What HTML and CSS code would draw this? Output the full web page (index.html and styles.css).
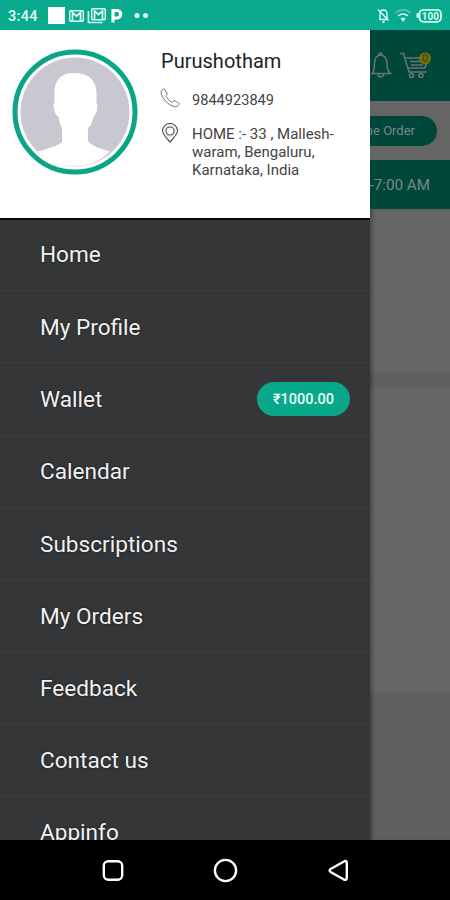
FILE: index.html
```
<!DOCTYPE html>
<html lang="en">
<head>
<meta charset="utf-8">
<title>Menu</title>
<link rel="stylesheet" href="styles.css">
</head>
<body>
<div class="phone">
  <header class="status">
    <span class="clock">3:44</span>
    <svg class="status-left" width="104" height="30" viewBox="0 0 104 30">
      <rect x="0" y="7" width="17" height="17" fill="#fff"/>
      <rect x="21.700" y="10.700" width="13.600" height="10.600" rx="1" fill="none" stroke="#e0fff7" stroke-width="1.400"/>
      <path d="M24.500 20.500v-8l4 3.500 4-3.500v8" fill="none" stroke="#e0fff7" stroke-width="1.700"/>
      <path d="M40.500 11v11.500h14" fill="none" stroke="#d8fff5" stroke-width="1.700"/>
      <rect x="43.700" y="8.700" width="13.600" height="11.100" rx="1" fill="none" stroke="#e0fff7" stroke-width="1.400"/>
      <path d="M46.500 19v-8l4 3.500 4-3.500v8" fill="none" stroke="#e0fff7" stroke-width="1.700"/>
      <path d="M65 22.500V10.500h4a3.500 3.500 0 0 1 0 7.500h-3" fill="none" stroke="#fff" stroke-width="3.200"/>
      <circle cx="89" cy="15.500" r="2.500" fill="#e9fffa"/>
      <circle cx="97.500" cy="15.500" r="2.500" fill="#e9fffa"/>
    </svg>
    <svg class="status-right" width="68" height="30" viewBox="0 0 68 30">
      <g fill="none" stroke="#d5fff4" stroke-width="1.400">
        <path d="M3 19.500h9M4 19v-5q0-4 3.500-4t3.500 4v5M2 9.500l10.500 11"/>
        <path d="M6.500 22h2" stroke-width="2"/>
      </g>
      <path d="M19.500 13q7.500-6.500 15 0" fill="none" stroke="#67c9b5" stroke-width="1.500"/>
      <path d="M22 16q5-4 10 0" fill="none" stroke="#d5fff4" stroke-width="1.600"/>
      <path d="M24.500 18.500q2.500-2 5 0l-2.500 3.500z" fill="#d5fff4"/>
      <rect x="43.500" y="9.800" width="21.500" height="12" rx="4" fill="none" stroke="#d5fff4" stroke-width="1.800"/>
      <rect x="40.500" y="13" width="3" height="5" rx="1" fill="#d5fff4"/>
      <text x="54.300" y="19.600" class="battery">100</text>
    </svg>
  </header>

  <div class="body">
    <aside class="drawer">
      <section class="profile">
        <svg class="avatar" width="126" height="126" viewBox="0 0 126 126">
          <circle cx="63" cy="63" r="60" fill="#fff" stroke="#0aa487" stroke-width="5"/>
          <circle cx="63" cy="63" r="54.500" fill="#c9c7d0"/>
          <path d="M26 102.500Q46 97 50 93V79Q47 74 46.500 68Q42 65 41.500 56Q41 54 42.500 54V45Q42 24 62 24Q83 24 84.500 43V54Q86 54 85 60Q84 66 81.500 68Q80 76 76 79V92Q80 98 98 102.500Q83 117 63 117Q40 117 26 102.500Z" fill="#fff"/>
        </svg>
        <div class="details">
          <h1 class="name">Purushotham</h1>
          <div class="line phone-line">
            <svg width="20" height="20" viewBox="0 0 20 20" fill="none" stroke="#777" stroke-width="1">
              <path d="M3.800.8Q.8 2 1 5Q2 9.500 6 13.500Q10 18 14.500 18.800Q17.500 19 19 16.500Q19.300 15.500 18.500 15L15 12.800Q14 12.300 13.200 13.200L12 14.400Q8.500 12.500 6.500 9.200L6 8.500Q6.300 7.500 6.900 6.900Q7.500 6 6.800 5L4.700 1.200Q4.300.7 3.800.8Z"/>
            </svg>
            <span>9844923849</span>
          </div>
          <div class="line">
            <svg width="20" height="20" viewBox="0 0 20 20" fill="none" stroke="#4d4d4d" stroke-width="1.100">
              <path d="M10 19Q2.500 11 2.500 8A7.500 7.500 0 0 1 17.500 8Q17.500 11 10 19Z"/>
              <circle cx="10" cy="8" r="4"/>
              <circle cx="10" cy="8" r="5" stroke="#aaa" stroke-width=".6"/>
            </svg>
            <span class="address">HOME :- 33 , Mallesh-<br>waram, Bengaluru,<br>Karnataka, India</span>
          </div>
        </div>
      </section>
      <nav class="menu">
        <a class="item">Home</a>
        <a class="item">My Profile</a>
        <a class="item">Wallet<span class="balance">₹1000.00</span></a>
        <a class="item">Calendar</a>
        <a class="item">Subscriptions</a>
        <a class="item">My Orders</a>
        <a class="item">Feedback</a>
        <a class="item">Contact us</a>
        <a class="item">Appinfo</a>
      </nav>
    </aside>

    <main class="page">
      <div class="toolbar">
        <svg width="80" height="71" viewBox="0 0 80 71" fill="none" stroke="#68716f" stroke-width="1.600">
          <path d="M2 43.500Q4.500 41 4.500 33.500Q4.500 26 10.500 25Q17 26 17 33.500Q17 41 20.500 43.500Z"/>
          <path d="M9 25q0-2 1.500-2t1.500 2M8 44q.5 3 2.800 3t2.700-3"/>
          <path d="M30 23.500h3.500l5.500 18.500h18M35 28h23l-3 10h-17M40 31.500h14M41 35h12"/>
          <circle cx="41.500" cy="45.500" r="2"/>
          <circle cx="51" cy="45.500" r="2"/>
          <circle cx="55" cy="28.500" r="6" fill="#746e08" stroke="none"/>
          <text x="55" y="32" class="count">0</text>
        </svg>
      </div>
      <div class="order-row"><span class="order">ne Order</span></div>
      <div class="slot">-7:00 AM</div>
      <div class="card card-top"></div>
      <div class="card card-main"></div>
    </main>
  </div>

  <footer class="navbar">
    <svg width="450" height="60" viewBox="0 0 450 60" fill="none" stroke="#fff" stroke-width="2.400">
      <rect x="103.800" y="21.300" width="18.400" height="18.400" rx="4.500"/>
      <circle cx="225.500" cy="30.500" r="10.600"/>
      <path d="M344.500 21.200L331 28.800Q328.200 30.500 331 32.200L343.500 39.300Q346.800 40.800 346.800 37.500V23.500Q346.800 20.300 344.500 21.200Z"/>
    </svg>
  </footer>
</div>
</body>
</html>
```

FILE: styles.css
```
* { box-sizing: border-box; }

body {
  margin: 0;
  background: #000;
  font-family: Roboto, "Noto Sans", sans-serif;
}

.phone {
  width: 450px;
  height: 900px;
  display: flex;
  flex-direction: column;
  overflow: hidden;
}

svg { display: block; flex: none; }

.status {
  height: 30px;
  flex: none;
  display: flex;
  align-items: center;
  padding: 0 6px 0 8px;
  background: #09aa8d;
  color: #e2fff8;
}

.clock {
  width: 40px;
  font-size: 14.5px;
  font-weight: 500;
  letter-spacing: .3px;
  padding-top: 2px;
}

.status-right { margin-left: auto; }

.battery {
  font-size: 10px;
  font-weight: 700;
  fill: #d5fff4;
  text-anchor: middle;
}

.body {
  height: 810px;
  flex: none;
  display: flex;
}

.drawer {
  width: 370px;
  flex: none;
  display: flex;
  flex-direction: column;
  overflow: hidden;
  background: #353638;
}

.profile {
  height: 190px;
  flex: none;
  display: flex;
  gap: 22px;
  padding: 19px 0 0 12px;
  background: #fff;
  border-bottom: 2px solid #080808;
}

.details { color: #444; }

.name {
  margin: 1px 0 15px 1px;
  font-size: 20px;
  line-height: 23px;
  font-weight: 400;
  letter-spacing: .02px;
  color: #222;
}

.line {
  display: flex;
  gap: 12px;
  font-size: 15px;
  line-height: 17.8px;
  white-space: nowrap;
}

.phone-line {
  height: 35px;
  font-size: 14.6px;
  line-height: 24px;
}

.address { padding-top: 3px; }

.menu {
  flex: 1;
  min-height: 0;
  overflow: hidden;
}

.item {
  height: 72.2px;
  display: flex;
  align-items: center;
  justify-content: space-between;
  padding: 1.6px 20px 0 40px;
  border-bottom: 1px solid #3d3e40;
  color: #f2f2f2;
  font-size: 22.6px;
  text-shadow: 0 0 2px #111;
}

.item:first-child {
  height: 71.2px;
  padding-top: 0;
  padding-bottom: 1px;
}

.balance {
  width: 93px;
  height: 34px;
  margin-top: -2px;
  border-radius: 17px;
  background: #0aa88b;
  color: #e9fffa;
  font-size: 14.5px;
  font-weight: 500;
  line-height: 35px;
  text-align: center;
  text-shadow: none;
}

.page {
  flex: 1;
  min-width: 0;
  overflow: hidden;
  background: #606060;
  color: #7b8785;
  box-shadow: inset 4px 0 4px -2px #3d3d3d;
}

.toolbar {
  height: 71px;
  background: #00473b;
}

.count {
  font-size: 10px;
  fill: #3c3b09;
  stroke: none;
  text-anchor: middle;
}

.order-row {
  height: 59px;
  display: flex;
  align-items: center;
  padding-right: 13px;
  background: #656565;
}

.order {
  width: 67px;
  height: 30px;
  padding-right: 22px;
  border-radius: 0 15px 15px 0;
  background: #00473b;
  display: flex;
  align-items: center;
  justify-content: flex-end;
  white-space: nowrap;
  overflow: hidden;
  font-size: 13px;
}

.slot {
  height: 49px;
  padding-right: 20px;
  background: #00473b;
  font-size: 15.2px;
  line-height: 50px;
  display: flex;
  justify-content: flex-end;
  white-space: nowrap;
}

.card {
  background: #676767;
  box-shadow: inset 4px 0 4px -2px #444;
}

.card-top { height: 165px; }

.card-main {
  height: 308px;
  margin-top: 12px;
}

.navbar {
  height: 60px;
  flex: none;
  background: #000;
}
```
